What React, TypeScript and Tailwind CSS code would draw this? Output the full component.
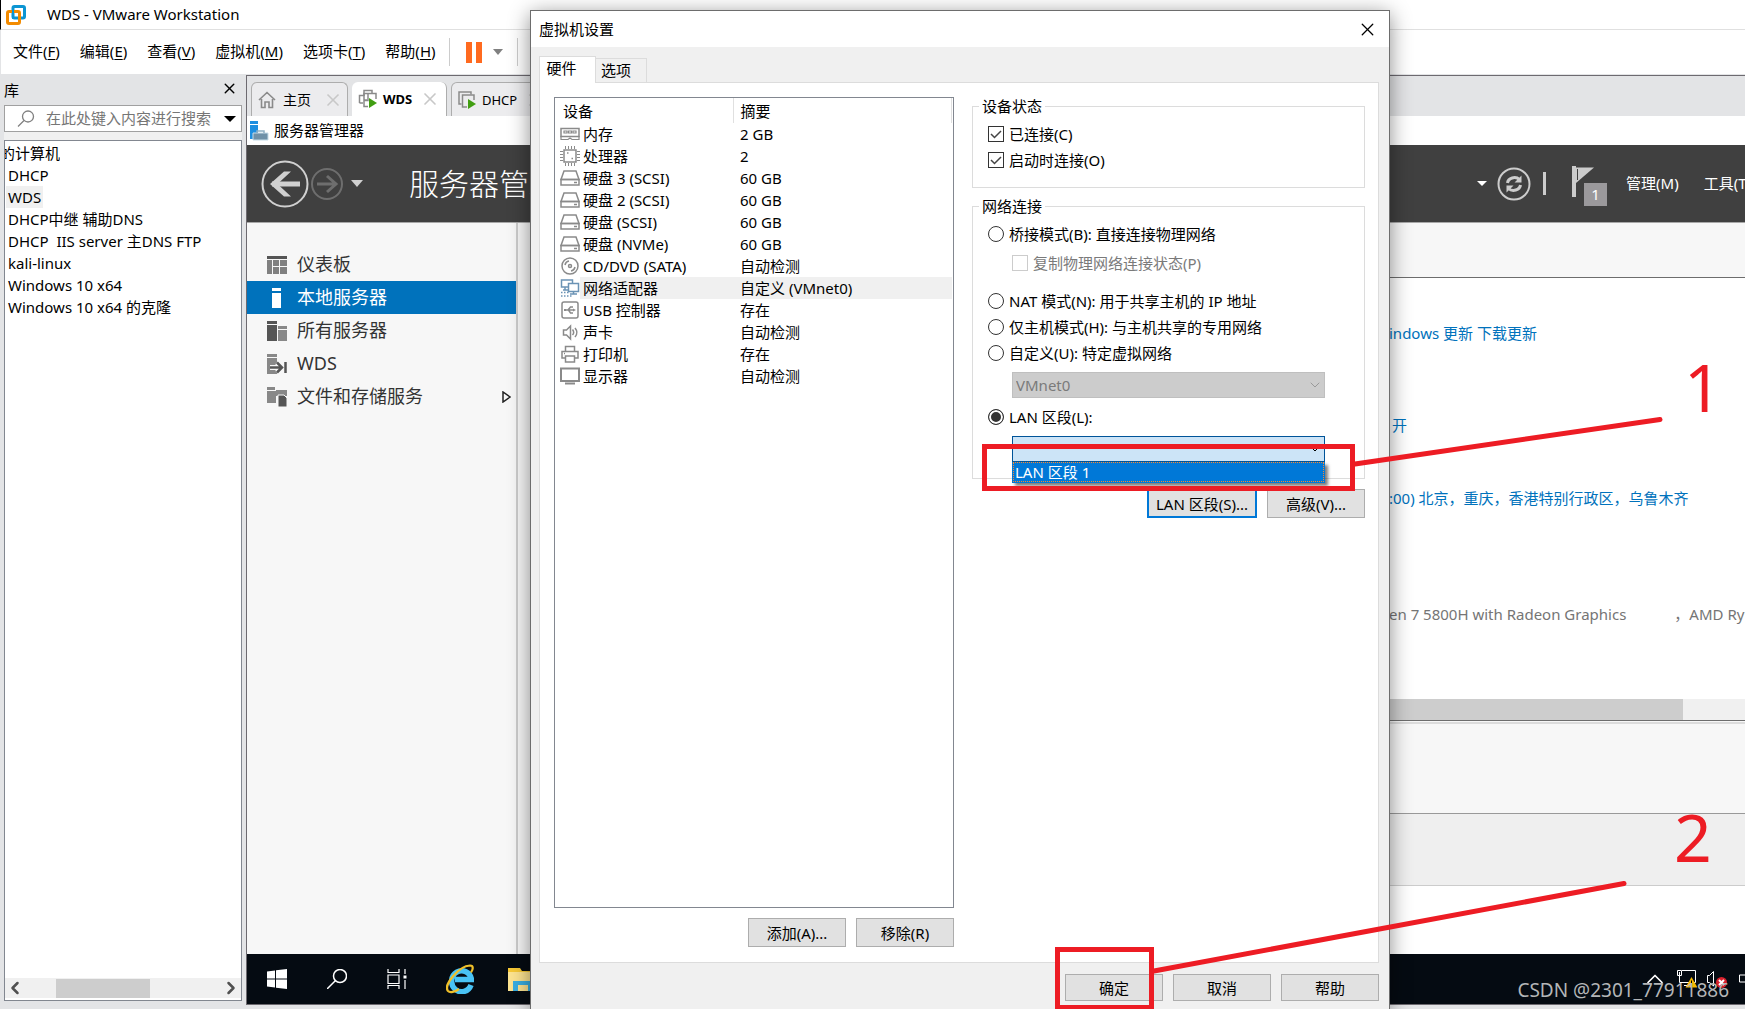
import { useState } from "react";
import type { ReactNode } from "react";
import { ChevronDown, ChevronLeft, ChevronRight, ChevronUp, X } from "lucide-react";

const machines = ["DHCP", "WDS", "DHCP中继 辅助DNS", "DHCP  IIS server 主DNS FTP", "kali-linux", "Windows 10 x64", "Windows 10 x64 的克隆"];

const menus = [
    ["文件", "F"],
    ["编辑", "E"],
    ["查看", "V"],
    ["虚拟机", "M"],
    ["选项卡", "T"],
    ["帮助", "H"],
];

const devices = [
    { icon: "memory", name: "内存", summary: "2 GB" },
    { icon: "cpu", name: "处理器", summary: "2" },
    { icon: "disk", name: "硬盘 3 (SCSI)", summary: "60 GB" },
    { icon: "disk", name: "硬盘 2 (SCSI)", summary: "60 GB" },
    { icon: "disk", name: "硬盘 (SCSI)", summary: "60 GB" },
    { icon: "disk", name: "硬盘 (NVMe)", summary: "60 GB" },
    { icon: "cd", name: "CD/DVD (SATA)", summary: "自动检测" },
    { icon: "network", name: "网络适配器", summary: "自定义 (VMnet0)" },
    { icon: "usb", name: "USB 控制器", summary: "存在" },
    { icon: "sound", name: "声卡", summary: "自动检测" },
    { icon: "printer", name: "打印机", summary: "存在" },
    { icon: "display", name: "显示器", summary: "自动检测" },
];

const deviceShapes: Record<string, ReactNode> = {
    memory: (
        <>
            <path d="M1 4.500h18v8H1z" />
            <path d="M4 7h3v2H4zM8.500 7h3v2h-3zM13 7h3v2h-3z" strokeWidth="1.200" />
            <path d="M1 12v3.500h7l2-1.500 2 1.500h7V12" strokeWidth="1.200" />
        </>
    ),
    cpu: (
        <>
            <path d="M4 4h12v12H4z" />
            <path d="M5.500 0v3M8.500 0v3M11.500 0v3M14.500 0v3M5.500 17v3M8.500 17v3M11.500 17v3M14.500 17v3M0 5.500h3M0 8.500h3M0 11.500h3M0 14.500h3M17 5.500h3M17 8.500h3M17 11.500h3M17 14.500h3" strokeWidth="1" />
            <path d="M7 7h1.500M11.500 12.500H13" />
        </>
    ),
    disk: (
        <>
            <path d="M4 3h12l3 8.500H1z" />
            <path d="M1 11.500h18V17H1z" />
            <path d="M14 14.500h3" />
        </>
    ),
    cd: (
        <>
            <circle cx="10" cy="10" r="8" />
            <circle cx="10" cy="10" r="1.500" />
            <path d="M5 9a5 5 0 0 1 4-4M15 11a5 5 0 0 1-4 4" />
        </>
    ),
    network: (
        <g stroke="#6b93b5">
            <path d="M1.500 2h11v7h-11z" />
            <path d="M8.500 5.500h10v8h-10z" fill="#fff" />
            <path d="M13.500 13.500V16M10 16h7M5 9v3M3 12h5" />
            <path d="M1 14.500h9M1 18h12" strokeDasharray="1.500 1.500" />
        </g>
    ),
    usb: (
        <>
            <rect x="2" y="2" width="16" height="16" rx="2" />
            <path d="M4.500 10H14M8 10l2.500-3H13M8.500 10l2 3H13" />
            <path d="M13 8.500l3 1.500-3 1.500zM4 9h2v2H4z" fill="#8a8a8a" stroke="none" />
        </>
    ),
    sound: (
        <>
            <path d="M3.500 8v5h3l4 4V4l-4 4z" />
            <path d="M12.500 7.500c1.500 2 1.500 4 0 5.500M15 6c2.500 3 2.500 6 0 9" />
        </>
    ),
    printer: (
        <>
            <path d="M5.500 7V2.500h9V7M5 14H2V7.500h16V14h-3" />
            <path d="M5.500 12h9v6h-9z" />
            <path d="M4 9.500h1" />
        </>
    ),
    display: (
        <>
            <path d="M1 2.500h18v12.500H1z" strokeWidth="2" />
            <path d="M5 17.500h10" strokeWidth="2" />
        </>
    ),
};

function DeviceIcon({ name }: { name: string }) {
    return (
        <svg viewBox="0 0 20 20" className="block h-5 w-5" fill="none" stroke="#8a8a8a" strokeWidth="1.500">
            {deviceShapes[name]}
        </svg>
    );
}

function VmIcon() {
    return (
        <svg viewBox="0 0 20 20" className="h-5 w-5 shrink-0" fill="none" stroke="#8a8a8a" strokeWidth="1.500">
            <path d="M4.500 14H2V2h12v2.500" />
            <path d="M10 17H5.500V5H17v5" />
            <path d="M11 9l8 5-8 5z" fill="#419e12" stroke="none" />
        </svg>
    );
}

function VmGroupIcon() {
    return (
        <svg viewBox="0 0 20 20" className="h-5 w-5 shrink-0" fill="none" stroke="#8a8a8a" strokeWidth="1.500">
            <path d="M6 7V1.500h8V4M1.500 14V6.500H6M1.500 14H5" />
            <path d="M9 11H6V4.500h4M10 17.500H6v-6h4V4.500h8V10" />
            <path d="M11 9l8 5-8 5z" fill="#419e12" stroke="none" />
        </svg>
    );
}

const navShapes: Record<string, ReactNode> = {
    dashboard: (
        <>
            <path d="M0 1h20v3H0z" fill="#555" />
            <path d="M0 5h5v14H0zM6 5h6v6H6zM13 5h7v6h-7zM6 12h6v7H6zM13 12h7v7h-7z" fill="#808080" />
        </>
    ),
    local: <path d="M5 0h9v3H5zM5 5h9v15H5z" fill="#fff" />,
    all: (
        <>
            <path d="M0 0h10v3H0zM0 4h10v16H0z" fill="#555" />
            <path d="M11 5h9v3h-9zM11 9h9v11h-9z" fill="#888" />
        </>
    ),
    wds: (
        <>
            <path d="M0 0h10v3H0zM0 4h10v16H0z" fill="#888" />
            <path d="M3 13.500h12M10 8.500l5 5-5 5" fill="none" stroke="#f7f7f7" strokeWidth="5" />
            <path d="M3 13.500h12M10 8.500l5 5-5 5M18.500 8v11" fill="none" stroke="#555" strokeWidth="2.500" />
        </>
    ),
    files: (
        <>
            <path d="M0 0h8v3H0zM0 4h9v12H0zM9 3h11v6H9z" fill="#888" />
            <path d="M11 8h6l3 3v9h-9z" fill="#555" stroke="#f7f7f7" />
        </>
    ),
};

const navItems = [
    { icon: "dashboard", label: "仪表板" },
    { icon: "local", label: "本地服务器" },
    { icon: "all", label: "所有服务器" },
    { icon: "wds", label: "WDS" },
    { icon: "files", label: "文件和存储服务" },
];

function DialogButton({ children, className = "h-[29px] w-[98px] border border-[#adadad]" }: { children: ReactNode; className?: string }) {
    return <button className={`bg-[#e1e1e1] leading-5 ${className}`}>{children}</button>;
}

function CheckBox({ label, checked = false, disabled = false }: { label: string; checked?: boolean; disabled?: boolean }) {
    return (
        <label className={`flex h-[26px] items-center gap-[5px] ${disabled ? "text-[#7a7a7a]" : ""}`}>
            <span className="grid">
                <input type="checkbox" defaultChecked={checked} disabled={disabled} className="peer col-start-1 row-start-1 h-4 w-4 appearance-none border border-[#333] bg-white disabled:border-[#ccc]" />
                <svg viewBox="0 0 16 16" className="pointer-events-none invisible col-start-1 row-start-1 h-4 w-4 peer-checked:visible" fill="none" stroke="#444" strokeWidth="1.500">
                    <path d="M3 8l3.500 3.500L13 5" />
                </svg>
            </span>
            {label}
        </label>
    );
}

function Radio({ label, value, current, onPick }: { label: string; value: string; current: string; onPick: (v: string) => void }) {
    return (
        <label className="flex h-[26px] items-center gap-[5px]">
            <input
                type="radio"
                name="connection"
                checked={current === value}
                onChange={() => onPick(value)}
                className="h-4 w-4 appearance-none rounded-full border border-[#333] bg-white checked:bg-[#333] checked:shadow-[inset_0_0_0_2px_white]"
            />
            {label}
        </label>
    );
}

function Library() {
    return (
        <aside className="flex w-[246px] shrink-0 flex-col px-1 pb-2">
            <div className="flex h-[31px] items-center justify-between pr-1">
                <h2>库</h2>
                <button aria-label="关闭" className="pb-[2px]"><X size={17} strokeWidth={2} /></button>
            </div>
            <div className="flex h-[27px] items-center border border-[#a0a0a0] bg-white pl-3 pr-[5px]">
                <svg viewBox="0 0 18 18" className="h-[18px] w-[18px] shrink-0" fill="none" stroke="#808080" strokeWidth="1.300">
                    <circle cx="11" cy="6.500" r="5.500" />
                    <path d="M7 10.500L1 16.500" />
                </svg>
                <input aria-label="搜索" placeholder="在此处键入内容进行搜索" className="ml-[11px] min-w-0 flex-1 pb-px outline-none placeholder:text-[#767676]" />
                <svg viewBox="0 0 12 6" className="h-[6px] w-3 shrink-0"><path d="M0 0h12L6 6z" /></svg>
            </div>
            <div className="h-2 bg-[#f0f0f0]" />
            <div className="flex min-h-0 flex-1 flex-col border border-[#828790] bg-white pt-px">
                <ul className="flex-1 overflow-hidden leading-[22px]">
                    <li className="flex w-[55px] justify-end overflow-hidden whitespace-nowrap">的计算机</li>
                    {machines.map(m => (
                        <li key={m} className="px-px"><span className={`inline-block whitespace-pre px-[2px] ${m === "WDS" ? "bg-[#f0f0f0]" : ""}`}>{m}</span></li>
                    ))}
                </ul>
                <div className="mb-[2px] flex h-5 items-center justify-between bg-[#f0f0f0] text-[#505050]">
                    <ChevronLeft size={20} strokeWidth={3} />
                    <div className="mr-10 h-[19px] w-[94px] bg-[#cdcdcd]" />
                    <ChevronRight size={20} strokeWidth={3} />
                </div>
            </div>
        </aside>
    );
}

function TabBar() {
    return (
        <div className="flex h-10 items-end gap-1 bg-[#e3e4e6] pl-1 text-[13px]">
            <div className="flex h-[34px] w-[97px] items-center rounded-t-md border border-b-0 border-[#adadad] bg-[#ececee] pl-[6px] text-sm">
                <svg viewBox="0 0 18 18" className="h-[18px] w-[18px]" fill="none" stroke="#8a8a8a" strokeWidth="1.600">
                    <path d="M1 9l8-7.500L17 9M3.500 8v8.500h3.500V11h4v5.500h3.500V8" />
                </svg>
                <span className="ml-[7px]">主页</span>
                <X size={20} strokeWidth={2} className="ml-3 text-[#c8c8c8]" />
            </div>
            <div className="flex h-[34px] w-[95px] items-center rounded-t-md border-r border-[#adadad] bg-white pl-[6px] font-bold">
                <VmGroupIcon />
                <span className="ml-[5px]">WDS</span>
                <X size={20} strokeWidth={2} className="ml-2 text-[#c8c8c8]" />
            </div>
            <div className="flex h-[34px] w-[104px] items-center rounded-t-md border border-b-0 border-[#adadad] bg-[#ececee] pl-[5px]">
                <VmIcon />
                <span className="ml-[5px]">DHCP</span>
                <X size={20} strokeWidth={2} className="ml-2 text-[#c8c8c8]" />
            </div>
        </div>
    );
}

function ServerHeader() {
    return (
        <div className="flex h-[78px] items-center border-b border-[#a8a8a8] bg-[#404040] text-white">
            <button aria-label="后退" className="ml-[14px]">
                <svg viewBox="0 0 48 48" className="h-12 w-12" fill="none" stroke="#d0d0d0">
                    <circle cx="24" cy="24" r="22.500" strokeWidth="2" />
                    <path d="M39 24H11" strokeWidth="5" />
                    <path d="M9 24l14-12.500h7L16.500 24 30 36.500h-7z" fill="#d0d0d0" stroke="none" />
                </svg>
            </button>
            <button aria-label="前进" className="ml-[2px]">
                <svg viewBox="0 0 32 32" className="h-8 w-8" fill="none" stroke="#6e6e6e">
                    <circle cx="16" cy="16" r="15" strokeWidth="2" />
                    <path d="M6 16h18M16 8l9 8-9 8" strokeWidth="3" />
                </svg>
            </button>
            <svg viewBox="0 0 12 7" className="ml-2 h-[7px] w-3" fill="#d0d0d0"><path d="M0 0h12L6 7z" /></svg>
            <h1 className="ml-[46px] text-[30px] font-light leading-10">服务器管理器</h1>
            <div className="ml-auto flex items-center">
                <svg viewBox="0 0 10 5" className="h-[5px] w-[10px]" fill="#fff"><path d="M0 0h10L5 5z" /></svg>
                <button aria-label="刷新" className="ml-[10px]">
                    <svg viewBox="0 0 34 34" className="h-[34px] w-[34px]" fill="none" stroke="#ccc">
                        <circle cx="17" cy="17" r="15.500" strokeWidth="2" />
                        <path d="M10.500 16a7 6 0 0 1 12-3.500M23.500 18a7 6 0 0 1-12 3.500" strokeWidth="3" />
                        <path d="M24.500 8.500v7h-7zM9.500 25.500v-7h7z" fill="#ccc" stroke="none" />
                    </svg>
                </button>
                <div className="ml-3 h-[23px] w-[3px] bg-[#ccc]" />
                <div className="relative ml-[26px] h-9 w-9">
                    <svg viewBox="0 0 22 31" className="h-[31px] w-[22px]">
                        <path d="M0 0h4v31H0z" fill="#ccc" />
                        <path d="M4 1.500h18L4 17z" fill="#ccc" />
                        <path d="M5.500 3v11" stroke="#404040" />
                    </svg>
                    <span className="absolute -bottom-1 right-[1px] h-[23px] w-[23px] bg-[#9b999c] text-center leading-[23px]">1</span>
                </div>
                <button className="ml-[18px] pb-[2px]">管理(M)</button>
                <button className="-mr-[6px] ml-[25px] pb-[2px]">工具(T)</button>
            </div>
        </div>
    );
}

function Taskbar() {
    return (
        <div className="flex h-[50px] shrink-0 items-center bg-[#050b12] pl-5 text-white">
            <svg viewBox="0 0 20 20" className="h-5 w-5" fill="#fff"><path d="M0 2.500L8 1.500v8H0zM9 1.300L20 0v9.500H9zM0 10.500h8v8L0 17.500zM9 10.500h11V20L9 18.700z" /></svg>
            <svg viewBox="0 0 20 20" className="ml-10 h-5 w-5" fill="none" stroke="#fff" strokeWidth="1.500">
                <circle cx="13" cy="7" r="6.500" />
                <path d="M8.500 11.500L0 20" />
            </svg>
            <svg viewBox="0 0 20 20" className="ml-10 h-5 w-5" fill="none" stroke="#fff" strokeWidth="1.200">
                <path d="M1 0v3.500h11V0M1 6h11v8.500H1zM1 20v-3.500h11V20M18 0v5M18 11v9" />
                <path d="M16.500 6.500h3v3h-3z" fill="#fff" stroke="none" />
            </svg>
            <svg viewBox="0 0 28 30" className="ml-[39px] h-[30px] w-7" fill="none">
                <path d="M25 21A10 10.500 0 1 1 25.500 15.500H9" stroke="#49c3f5" strokeWidth="5.500" />
                <path d="M2 27C-3 21 13 2 24 1.500c4 0 3 4 1 7M2 27c2 2 7 1 11-2" stroke="#f0c02a" strokeWidth="2.200" />
            </svg>
            <svg viewBox="0 0 30 24" className="ml-[34px] h-6 w-[30px]">
                <path d="M0 1h12l2 3h16v20H0z" fill="#f7c936" />
                <path d="M0 5h30v19H0z" fill="#fde491" />
                <path d="M5 14h20v10h-5v-6H10v6H5z" fill="#38aee2" />
            </svg>
            <div className="ml-auto flex items-center">
                <ChevronUp size={28} strokeWidth={1.5} />
                <svg viewBox="0 0 20 20" className="ml-2 h-5 w-5" fill="none" stroke="#fff">
                    <path d="M2.500 5v8.500h16V1.500H5M7 16.500h7" />
                    <path d="M.500 1.500h4v5h-4zM2.500 3v3" />
                    <path d="M14.500 8l6 10.500h-12z" fill="#f7b900" stroke="none" />
                    <path d="M14.500 11.500v3.500M14.500 16v1.500" stroke="#000" />
                </svg>
                <svg viewBox="0 0 20 20" className="ml-[10px] h-5 w-5" fill="none" stroke="#fff">
                    <path d="M.500 6.500v7h2l4 3.500V2.500l-4 4z" />
                    <circle cx="14.500" cy="13.500" r="5.500" fill="#d8202c" stroke="none" />
                    <path d="M12 11l5 5M17 11l-5 5" strokeWidth="2" />
                </svg>
                <svg viewBox="0 0 6 10" className="ml-3 h-[10px] w-[6px]" fill="none" stroke="#fff"><path d="M6 1H.500v7H6" /></svg>
            </div>
        </div>
    );
}

function ServerManager() {
    return (
        <section className="mb-1 mt-px flex min-w-0 flex-1 flex-col border border-r-0 border-[#6d6a70] bg-white">
            <TabBar />
            <div className="flex h-[29px] items-center bg-white pl-[2px]">
                <svg viewBox="0 0 20 20" className="h-5 w-5">
                    <path d="M1 0h8v3H1zM1 4h8v14H1z" fill="#1e8fe0" />
                    <path d="M4 12h15v7H4z" fill="#6f91a8" stroke="#c6dce8" />
                    <path d="M8 12v-2h7v2" fill="none" stroke="#8fb0c4" strokeWidth="1.500" />
                </svg>
                <span className="ml-[5px] pb-[2px]">服务器管理器</span>
            </div>
            <ServerHeader />
            <div className="flex min-h-0 flex-1 bg-[#f7f7f7]">
                <nav className="mr-5 w-[271px] shrink-0 border-r-2 border-[#ccc] pt-[25px] text-lg leading-[33px] text-[#333]">
                    {navItems.map(item => (
                        <a key={item.label} href="#" className={`flex h-[33px] items-center pl-5 ${item.icon === "local" ? "bg-[#0072bc] text-white" : ""}`}>
                            <svg viewBox="0 0 20 20" className="h-5 w-5">{navShapes[item.icon]}</svg>
                            <span className="ml-[10px]">{item.label}</span>
                            {item.icon === "files" && (
                                <svg viewBox="0 0 9 12" className="ml-auto mr-[5px] h-3 w-[9px]" fill="none" stroke="#222" strokeWidth="1.500"><path d="M1 1v10l7-5z" /></svg>
                            )}
                        </a>
                    ))}
                </nav>
                <div className="flex min-w-0 flex-1 flex-col bg-white">
                    <div className="h-[55px] border-b border-[#6d6d6d] bg-[#f7f7f7]" />
                    <div className="flex flex-1 flex-col whitespace-nowrap pl-[851px] pt-[45px] leading-5 text-[#0072bc]">
                        <a href="#">indows 更新 下载更新</a>
                        <a href="#" className="ml-[3px] mt-[72px]">开</a>
                        <a href="#" className="mt-[53px]">:00) 北京，重庆，香港特别行政区，乌鲁木齐</a>
                        <p className="mt-24 flex gap-12 text-[#757575]">
                            <span>en 7 5800H with Radeon Graphics</span>
                            <span>，AMD Ry</span>
                        </p>
                    </div>
                    <div className="h-[21px] bg-[#f0f0f0] pr-[62px]">
                        <div className="h-full bg-[#cdcdcd]" />
                    </div>
                    <div className="h-1 border-b-2 border-t border-b-[#dcdcdc] border-t-[#6d6d6d] bg-[#f7f7f7]" />
                    <div className="h-[90px] border-b border-[#999] bg-[#f7f7f7]" />
                    <div className="h-[72px] border-b border-[#ccc] bg-[#efefef]" />
                    <div className="h-[68px]" />
                </div>
            </div>
            <Taskbar />
        </section>
    );
}

function DeviceTable() {
    return (
        <div className="flex-1 border border-[#828790] bg-white pr-px">
            <table className="w-full table-fixed border-collapse text-left leading-5">
                <colgroup>
                    <col className="w-[25px]" />
                    <col className="w-[153px]" />
                    <col />
                </colgroup>
                <thead>
                    <tr className="h-[25px]">
                        <th colSpan={2} className="border-r border-[#e0e0e0] pl-2 font-normal">设备</th>
                        <th className="border-r border-[#e0e0e0] pl-[7px] font-normal">摘要</th>
                    </tr>
                </thead>
                <tbody>
                    {devices.map(d => {
                        const bg = d.icon === "network" ? "bg-[#f0f0f0]" : "";
                        return (
                            <tr key={d.name} className="h-[22px]">
                                <td className="pl-[5px]"><DeviceIcon name={d.icon} /></td>
                                <td className={`pl-[3px] ${bg}`}>{d.name}</td>
                                <td className={`pl-[7px] ${bg}`}>{d.summary}</td>
                            </tr>
                        );
                    })}
                </tbody>
            </table>
        </div>
    );
}

function NetworkSettings() {
    const [mode, setMode] = useState("lan");
    const [segment, setSegment] = useState("");

    return (
        <div className="flex min-w-0 flex-1 flex-col">
            <fieldset className="border border-[#dcdcdc] pb-[14px] pl-[6px]">
                <legend className="px-[3px] leading-[18px]">设备状态</legend>
                <div className="pl-[9px] pt-[6px]">
                    <CheckBox label="已连接(C)" checked />
                    <CheckBox label="启动时连接(O)" checked />
                </div>
            </fieldset>
            <fieldset className="mt-[9px] border border-[#dcdcdc] pb-4 pl-[6px]">
                <legend className="px-[3px] leading-[18px]">网络连接</legend>
                <div className="pl-[9px] pr-[39px] pt-[6px]">
                    <Radio label="桥接模式(B): 直接连接物理网络" value="bridge" current={mode} onPick={setMode} />
                    <div className="mb-3 mt-[3px] pl-6">
                        <CheckBox label="复制物理网络连接状态(P)" disabled />
                    </div>
                    <Radio label="NAT 模式(N): 用于共享主机的 IP 地址" value="nat" current={mode} onPick={setMode} />
                    <Radio label="仅主机模式(H): 与主机共享的专用网络" value="host" current={mode} onPick={setMode} />
                    <Radio label="自定义(U): 特定虚拟网络" value="custom" current={mode} onPick={setMode} />
                    <div className="my-[6px] ml-6 grid items-center">
                        <select aria-label="自定义" disabled className="col-start-1 row-start-1 h-[26px] appearance-none border border-[#bfbfbf] bg-[#ccc] pl-[3px] text-[#7a7a7a] opacity-100">
                            <option>VMnet0</option>
                        </select>
                        <ChevronDown size={16} strokeWidth={1.5} className="pointer-events-none col-start-1 row-start-1 mr-[2px] justify-self-end text-[#999]" />
                    </div>
                    <Radio label="LAN 区段(L):" value="lan" current={mode} onPick={setMode} />
                    <div className="relative ml-6 mt-[6px] grid items-center">
                        <select aria-label="LAN 区段" value={segment} onChange={e => setSegment(e.target.value)} className="col-start-1 row-start-1 h-[26px] appearance-none border border-[#005499] bg-[#cce4f7] pl-[3px]">
                            <option value=""></option>
                            <option value="1">LAN 区段 1</option>
                        </select>
                        <ChevronDown size={16} strokeWidth={1.5} className="pointer-events-none col-start-1 row-start-1 mr-[2px] justify-self-end" />
                        <ul role="listbox" className="absolute inset-x-0 top-full border border-t-0 border-[#0078d7] shadow-[3px_3px_3px_rgba(0,0,0,0.5)]">
                            <li role="option" className="border border-dotted border-[#ff8728] bg-[#0078d7] pl-px leading-[18px] text-white" onClick={() => setSegment("1")}>LAN 区段 1</li>
                        </ul>
                    </div>
                </div>
            </fieldset>
            <div className="mt-[10px] flex justify-end gap-[10px]">
                <DialogButton className="h-[29px] w-[110px] border-2 border-[#0078d7]">LAN 区段(S)...</DialogButton>
                <DialogButton>高级(V)...</DialogButton>
            </div>
        </div>
    );
}

function SettingsDialog() {
    const footerButton = "h-[27px] w-[98px] border border-[#adadad]";

    return (
        <div role="dialog" aria-label="虚拟机设置" className="absolute bottom-0 left-[530px] top-[10px] flex w-[860px] flex-col border border-b-0 border-[#6d6d6d] bg-[#f0f0f0] shadow-[0_4px_20px_rgba(0,0,0,0.45)]">
            <div className="flex h-9 items-center justify-between bg-white pl-2 pr-[11px]">
                <h2>虚拟机设置</h2>
                <button aria-label="关闭"><X size={21} strokeWidth={1.5} /></button>
            </div>
            <div className="flex min-h-0 flex-1 flex-col pl-2 pr-[10px] pt-[9px]">
                <div role="tablist" className="flex items-end">
                    <button role="tab" aria-selected="true" className="relative -mb-px h-[27px] w-[57px] border border-b-0 border-[#dcdcdc] bg-white pb-1 pr-3">硬件</button>
                    <button role="tab" aria-selected="false" className="h-6 w-[51px] border border-b-0 border-l-0 border-[#dcdcdc] pb-px pr-[10px]">选项</button>
                </div>
                <div className="flex flex-1 border border-[#dcdcdc] bg-white pb-[15px] pl-[14px] pr-[13px] pt-[14px]">
                    <div className="mr-[18px] flex w-[400px] shrink-0 flex-col">
                        <DeviceTable />
                        <div className="mt-[10px] flex justify-end gap-[10px]">
                            <DialogButton>添加(A)...</DialogButton>
                            <DialogButton>移除(R)</DialogButton>
                        </div>
                    </div>
                    <NetworkSettings />
                </div>
                <div className="flex justify-end gap-[10px] pb-2 pt-[11px]">
                    <DialogButton className={footerButton}>确定</DialogButton>
                    <DialogButton className={footerButton}>取消</DialogButton>
                    <DialogButton className={footerButton}>帮助</DialogButton>
                </div>
            </div>
        </div>
    );
}

// red marker boxes and arrows drawn over the dialog
function Marks() {
    return (
        <div className="pointer-events-none absolute inset-0 text-[66px] leading-[66px] text-[#ed1c24]">
            <svg className="h-full w-full" fill="none" stroke="#ed1c24" strokeWidth="5">
                <path d="M984.500 446.500h368v42h-368z" />
                <path d="M1057.500 949.500h94v58h-94z" />
                <path d="M1355 464L1660 419.500M1154 971L1624 883.500" strokeLinecap="round" />
            </svg>
            <span className="absolute left-[1684px] top-[353px]">1</span>
            <span className="absolute left-[1674px] top-[803px]">2</span>
            <span className="absolute bottom-[7px] right-4 text-[19px] leading-6 text-[#b4b6b8]">CSDN @2301_77911886</span>
        </div>
    );
}

export default function App() {
    return (
        <div className="relative flex h-screen flex-col overflow-hidden bg-white font-['Noto_Sans','Noto_Sans_CJK_SC',sans-serif] text-[15px] leading-5 text-black">
            <header className="flex h-[30px] shrink-0 items-center border-b border-l border-b-[#e0e0e0] border-l-black pl-[5px]">
                <svg viewBox="0 0 20 20" className="h-5 w-5" fill="none" strokeWidth="3">
                    <rect x="7" y="1.500" width="11.500" height="11.500" rx="1.500" stroke="#0b95d3" />
                    <rect x="1.500" y="6.500" width="12" height="12" rx="1.500" stroke="#f38b00" />
                    <path d="M7 5v8h5" stroke="#0b95d3" strokeWidth="2" />
                </svg>
                <h1 className="ml-[21px] pb-[2px]">WDS - VMware Workstation</h1>
            </header>
            <div className="flex h-11 shrink-0 items-center border-l border-[#e3e4e6] pl-3">
                <div className="flex gap-5 pb-[2px]">
                    {menus.map(([name, key]) => (
                        <button key={key}>{name}(<u className="underline-offset-2">{key}</u>)</button>
                    ))}
                </div>
                <div className="ml-[13px] h-7 w-px bg-[#ccc]" />
                <button aria-label="挂起" className="ml-4 flex gap-1">
                    <span className="h-[21px] w-[6px] bg-[#ff6a1f]" />
                    <span className="h-[21px] w-[6px] bg-[#ff6a1f]" />
                </button>
                <svg viewBox="0 0 10 6" className="ml-[11px] h-[6px] w-[10px]" fill="#808080"><path d="M0 0h10L5 6z" /></svg>
                <div className="ml-[14px] h-7 w-px bg-[#ccc]" />
            </div>
            <main className="flex min-h-0 flex-1 bg-[#e3e4e6]">
                <Library />
                <ServerManager />
            </main>
            <SettingsDialog />
            <Marks />
        </div>
    );
}
